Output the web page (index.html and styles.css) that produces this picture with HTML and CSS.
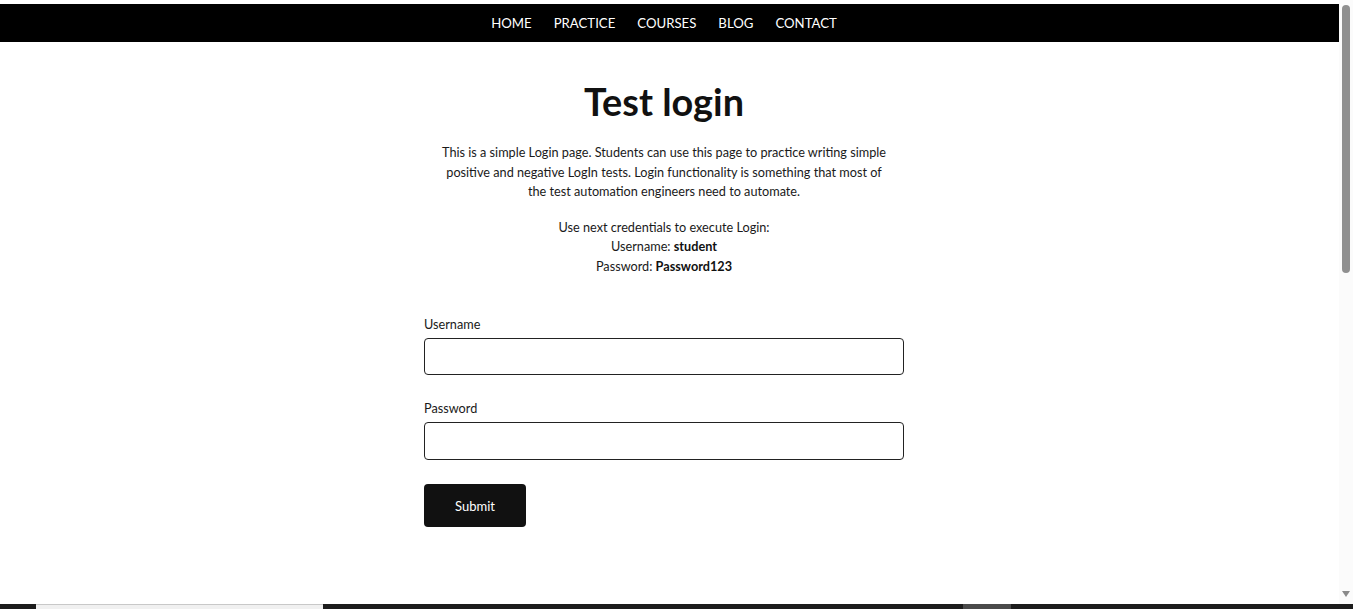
FILE: index.html
```html
<!DOCTYPE html>
<html lang="en">
<head>
    <meta charset="utf-8">
    <title>Test Login | Practice Test Automation</title>
    <link rel="stylesheet" href="styles.css">
</head>
<body>
    <nav class="menu">
        <a href="#">Home</a>
        <a href="#">Practice</a>
        <a href="#">Courses</a>
        <a href="#">Blog</a>
        <a href="#">Contact</a>
    </nav>
    <main class="page">
        <section class="login">
            <h2 class="title">Test login</h2>
            <p class="intro">This is a simple Login page. Students can use this page to practice writing simple positive and negative LogIn tests. Login functionality is something that most of the test automation engineers need to automate.</p>
            <p class="intro">Use next credentials to execute Login:<br>
                Username: <strong>student</strong><br>
                Password: <strong>Password123</strong></p>
            <form class="form" onsubmit="return false">
                <div class="field">
                    <label for="username">Username</label>
                    <input type="text" id="username" name="username">
                </div>
                <div class="field">
                    <label for="password">Password</label>
                    <input type="password" id="password" name="password">
                </div>
                <button class="btn" type="submit">Submit</button>
            </form>
        </section>
    </main>
    <!-- window scrollbar and the os taskbar, drawn over the page -->
    <div class="scrollbar">
        <span class="scroll-thumb"></span>
        <span class="scroll-arrow"></span>
    </div>
    <div class="taskbar">
        <span class="task-window"></span>
        <span class="task-app"></span>
    </div>
</body>
</html>
```

FILE: styles.css
```css
* { box-sizing: border-box; }
html { background-color: #fff; }
body {
    margin: 0;
    font-family: Lato, "Open Sans", sans-serif;
    color: #1a1a1a;
}

/* top menu */
.menu {
    margin-top: 4px;
    height: 38px;
    background-color: #000;
    display: flex;
    justify-content: center;
    align-items: center;
    gap: 22px;
    padding-right: 25px; /* page is centred left of the scrollbar */
}
.menu a {
    color: #fff;
    text-decoration: none;
    text-transform: uppercase;
    font-size: 13.2px;
}

.page {
    padding-right: 25px;
    padding-bottom: 60px;
}
.login {
    width: 480px;
    margin: 0 auto;
    text-align: center;
}
.title {
    font-size: 37.8px;
    font-weight: 700;
    color: #111;
    margin: 36px 0 17px;
    line-height: 48px;
}
.intro {
    font-size: 12.7px;
    line-height: 19.5px;
    margin: 0 auto 16px;
    max-width: 450px;
}
.intro strong { color: #111; }

/* form */
.form {
    margin-top: 39px;
    text-align: left;
}
.field { margin-bottom: 24px; }
.field label {
    display: block;
    font-size: 12.7px;
    line-height: 19px;
    margin-bottom: 4px;
}
.field input {
    display: block;
    width: 100%;
    height: 37px;
    border: 1px solid #222;
    border-radius: 4px;
    font: inherit;
    padding: 0 10px;
}
.field + .field input { height: 38px; }
.btn {
    display: block;
    width: 102px;
    height: 43px;
    background-color: #111;
    color: #fff;
    border: none;
    border-radius: 4px;
    font-family: inherit;
    font-size: 13px;
}

.scrollbar {
    position: fixed;
    top: 0;
    right: 0;
    width: 14px;
    height: 100%;
    background-color: #fbfbfb;
}
.scroll-thumb {
    position: absolute;
    top: 5px;
    left: 3px;
    width: 8px;
    height: 268px;
    border-radius: 4px;
    background-color: #8f8f8f;
}
.scroll-arrow {
    position: absolute;
    top: 591px;
    left: 3px;
    border-left: 4px solid transparent;
    border-right: 4px solid transparent;
    border-top: 6px solid #8a8a8a;
}

/* os taskbar peeking in at the bottom */
.taskbar {
    position: fixed;
    left: 0;
    bottom: 0;
    width: 100%;
    height: 5px;
    background-color: #1c1c1c;
    display: flex;
}
.task-window {
    margin-left: 36px;
    width: 287px;
    background-color: #f0f0f0;
    border-top: 1px solid #c8c8c8;
}
.task-app {
    margin-left: 640px;
    width: 48px;
    background-color: #4a4a4a;
}
```
